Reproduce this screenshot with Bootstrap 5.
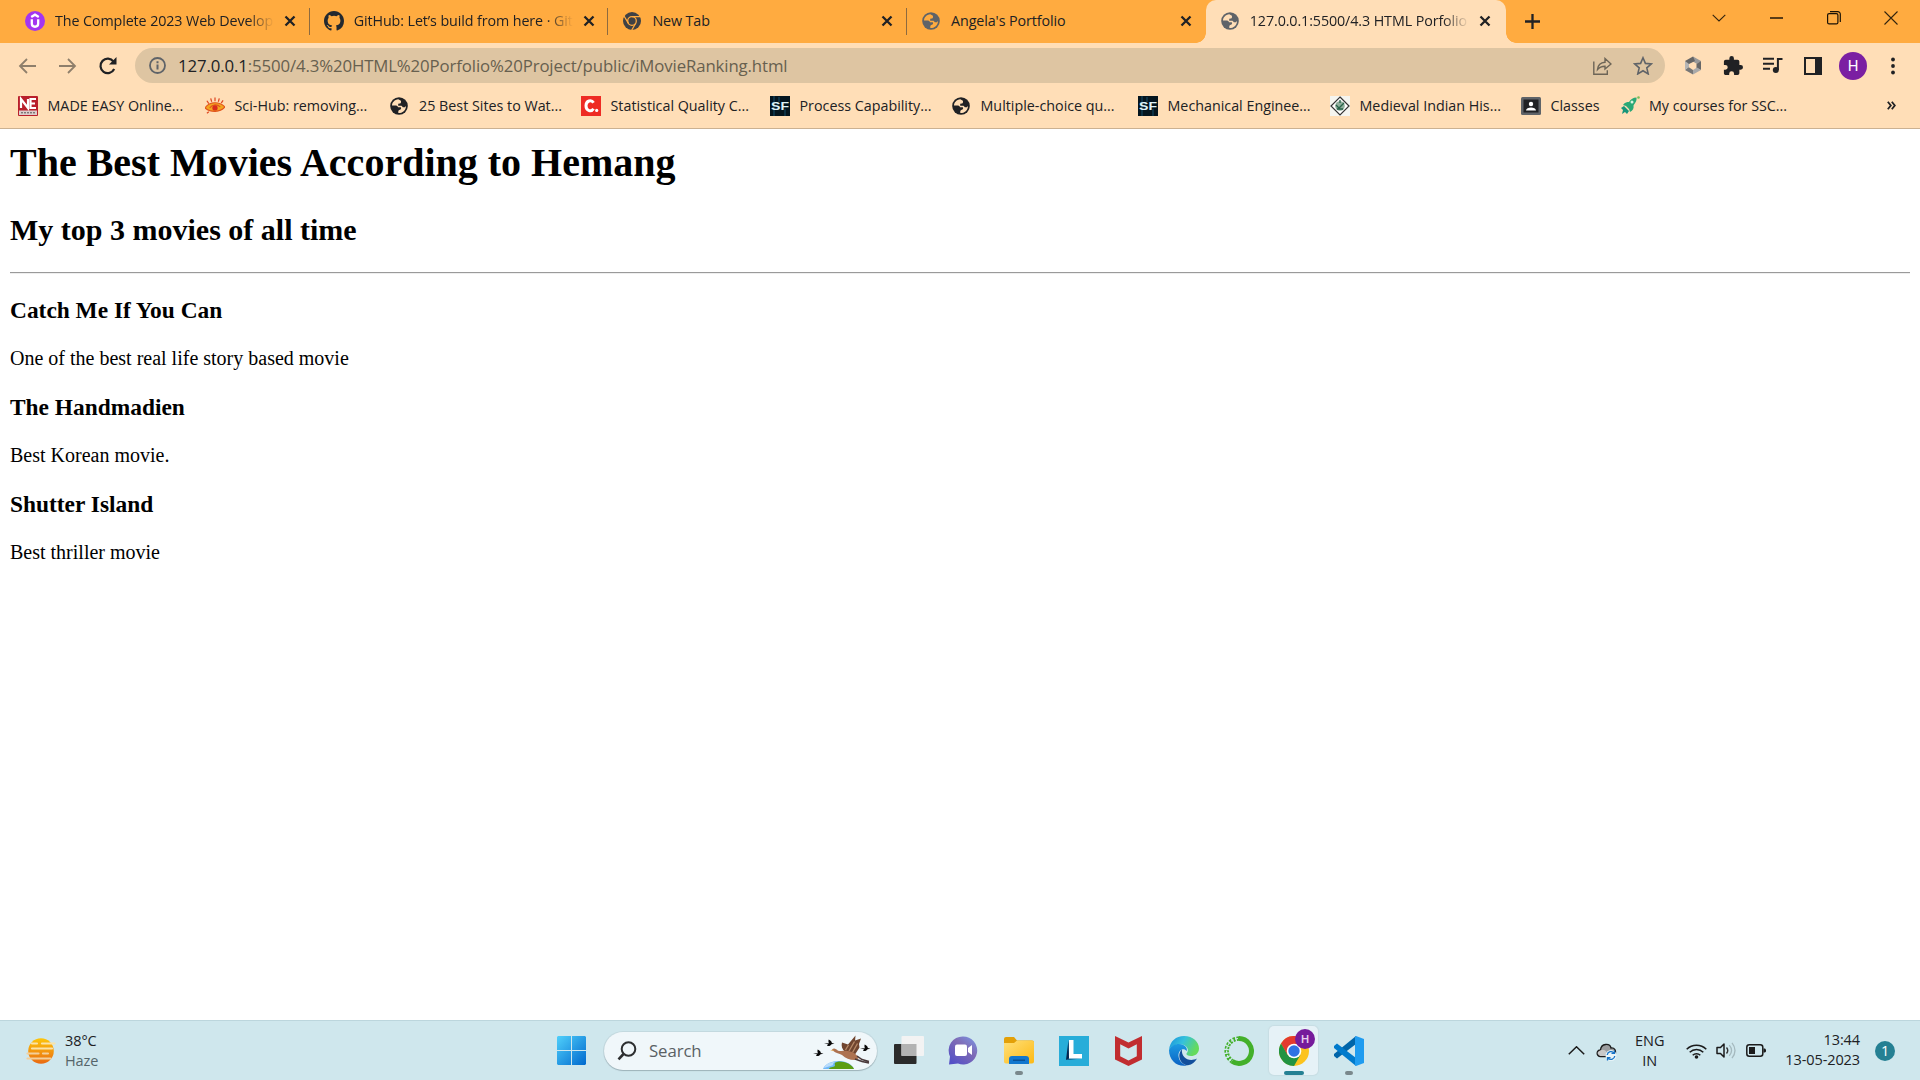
<!DOCTYPE html>
<html lang="en">
<head>
<meta charset="utf-8">
<title>The Best Movies According to Hemang</title>
<link href="https://cdn.jsdelivr.net/npm/bootstrap@5.3.0/dist/css/bootstrap.min.css" rel="stylesheet">
<style>
  :root { --frame: #ffab40; --bar: #ffdeb7; --ink: #202124; }
  body { width: 1920px; height: 1080px; font-family: "Open Sans", "Noto Sans", sans-serif; color: var(--ink); background: #fff; }
  svg { display: block; flex: none; }

  /* tab strip */
  .tabstrip { height: 43px; background: var(--frame); padding-left: 11px; font-size: 14.3px; letter-spacing: -.1px; }
  .tab { width: 298.7px; height: 43px; padding: 0 0 1px 14px; }
  .tab .caption { margin-left: 10px; width: 219px; line-height: 20px; }
  .tab .cut { -webkit-mask-image: linear-gradient(90deg, #000 88%, transparent 100%); mask-image: linear-gradient(90deg, #000 88%, transparent 100%); }
  .tab .shut { margin-left: 10px; }
  .tab.split { border-right: 1px solid transparent; border-image: linear-gradient(transparent 9px, #8d6a3f 9px, #8d6a3f 34px, transparent 34px) 1; }
  .tab.current { width: 300px; background: var(--bar); border-radius: 10px 10px 0 0; }
  .tab.current::before, .tab.current::after { content: ""; position: absolute; bottom: 0; width: 10px; height: 10px; }
  .tab.current::before { left: -10px; background: radial-gradient(circle at 0 0, transparent 9.5px, var(--bar) 10px); }
  .tab.current::after { right: -10px; background: radial-gradient(circle at 100% 0, transparent 9.5px, var(--bar) 10px); }
  .newtab { padding: 0 0 1px 19px; }
  .winctl { width: 57.3px; height: 36px; }

  /* toolbar */
  .tools { height: 44px; background: var(--bar); padding: 1px 14px 0 14px; }
  .nav-back { padding-left: 4px; }
  .nav-forward { padding-left: 23px; }
  .nav-reload { padding: 0 18px 0 22px; }
  .tool { width: 40px; height: 35px; }
  .omnibox { width: 1530px; height: 35px; background: #dec5a2; border-radius: 18px; padding: 0 12px 0 10px; }
  .address { margin-left: 12px; font-size: 16.8px; letter-spacing: -.12px; line-height: 24px; color: #67604f; }
  .address b { font-weight: 400; color: var(--ink); }
  .avatar { width: 28px; height: 28px; background: #7b1fa2; color: #fff; font: 15px/28px Roboto, sans-serif; }

  /* bookmarks */
  .marks { height: 42px; background: var(--bar); border-bottom: 1px solid #cbb192; padding: 0 0 4px 18px; font-size: 14.3px; letter-spacing: 0; }
  .bm { gap: 9.5px; flex: none; }

  /* document */
  .doc { height: 891px; padding: 11px 10px 10px; font-family: "Liberation Serif", "Times New Roman", serif; color: #000; }
  .doc h1 { font-size: 40px; line-height: 46px; font-weight: 700; margin: 0 0 27px; }
  .doc h2 { font-size: 30px; line-height: 34px; font-weight: 700; margin: 0 0 25px; }
  .doc hr { margin: 0 0 22px; height: 2px; border: 0; border-top: 1px solid #9a9a9a; border-bottom: 1px solid #eee; opacity: 1; }
  .doc h3 { font-size: 23.4px; line-height: 28px; font-weight: 700; margin: 0 0 22px; }
  .doc p { font-size: 20px; line-height: 24px; margin: 0 0 23px; }

  /* taskbar */
  .taskbar { height: 60px; background: #cfe7ed; border-top: 1px solid #bcd6dd; font-size: 14.5px; line-height: 20px; letter-spacing: -.1px; }
  .weather { width: 551px; padding-left: 26px; gap: 9px; }
  .weather .muted { color: #55656a; }
  .finder { width: 273px; height: 38px; margin: 0 6px 0 6px; background: #f0f7fa; border-radius: 19px; box-shadow: 0 1px 1px #9eb3ba, 0 0 0 1px #c3d9df; padding-left: 13px; font-size: 16.8px; color: #5a6164; }
  .app { width: 55px; height: 59px; }
  .app.live::after { content: ""; position: absolute; bottom: 5px; left: 50%; width: 8px; height: 4px; margin-left: -4px; border-radius: 2px; background: #7a888c; }
  .app.front::before { content: ""; position: absolute; inset: 5px 3px 5px 3px; background: #e6f2f7; border-radius: 5px; box-shadow: 0 0 1px 1px #c7dde3; }
  .app.front::after { width: 20px; margin-left: -10px; background: #258093; }
  .app svg { position: relative; }
  .app .who { top: 8px; right: 6px; }
  .tray { padding-right: 25px; }
  .note { width: 20px; height: 20px; background: #258093; color: #fff; margin-left: 15px; }
</style>
<script src="https://cdn.jsdelivr.net/npm/bootstrap@5.3.0/dist/js/bootstrap.bundle.min.js"></script>
</head>
<body class="d-flex flex-column overflow-hidden">

<svg width="0" height="0" class="position-absolute">
  <symbol id="x" viewBox="0 0 12 12"><path d="M1.500 1.500l9 9M10.500 1.500l-9 9" stroke="#202124" stroke-width="2.300" fill="none"/></symbol>
  <symbol id="globe" viewBox="0 0 18 18"><circle cx="9" cy="9" r="8.800" fill="currentColor"/><path d="M8.300 2.200C4.600 2.500 2 5.500 2 8.500h3.200c1.500 0 2.600.6 2.900 1.800h2.400c.8 0 .9 1.600 0 2.200-.7.500-2 .4-2.200 1.700v1.900c3.900.2 7.700-2.800 7.700-7.200l-1.200 1.300h-1.900L11.500 8.700H8.200V6.800l1.700-.4c1.200-.2 1.300-1.400 1-2.700z" fill="var(--hole)"/></symbol>
  <symbol id="sf" viewBox="0 0 20 20"><rect width="20" height="20" fill="#04151f"/><path d="M4 0v20M9 1v5M15 13v7" stroke="#0c3145" stroke-width="2"/><text x="1" y="13.800" font-family="Liberation Sans" font-weight="700" font-size="11.500" textLength="18" lengthAdjust="spacingAndGlyphs" fill="#dff3f8">SF</text></symbol>
</svg>

<header class="flex-shrink-0">
  <div class="tabstrip d-flex">
    <div class="tab split d-flex align-items-center">
      <svg width="20" height="20" viewBox="0 0 20 20"><circle cx="10" cy="10" r="10" fill="#a435f0"/><path d="M6.200 6L10 3.700 13.800 6M6.800 8.300v4.200c0 4.300 6.400 4.300 6.400 0V8.300" fill="none" stroke="#fff" stroke-width="2.300"/></svg>
      <div class="caption cut text-nowrap overflow-hidden">The Complete 2023 Web Develop</div>
      <svg class="shut" width="12" height="12"><use href="#x"/></svg>
    </div>
    <div class="tab split d-flex align-items-center">
      <svg width="20" height="20" viewBox="0 0 16 16"><path fill="#24292f" d="M8 0C3.580 0 0 3.580 0 8c0 3.540 2.290 6.530 5.470 7.590.4.070.55-.17.55-.38v-1.490c-2.010.37-2.530-.49-2.690-.94-.09-.23-.48-.94-.82-1.130-.28-.15-.68-.52-.01-.53.63-.01 1.080.58 1.230.82.72 1.210 1.870.87 2.330.66.070-.52.280-.87.510-1.070-1.780-.2-3.640-.89-3.640-3.950 0-.87.310-1.590.820-2.150-.080-.2-.36-1.020.080-2.120 0 0 .67-.21 2.200.820a7.600 7.600 0 0 1 4 0c1.530-1.040 2.200-.82 2.200-.82.440 1.100.160 1.920.080 2.120.51.560.82 1.270.82 2.150 0 3.070-1.870 3.750-3.650 3.950.29.250.54.730.54 1.480v2.200c0 .21.150.46.550.38A8.010 8.010 0 0 0 16 8c0-4.420-3.580-8-8-8z"/></svg>
      <div class="caption cut text-nowrap overflow-hidden">GitHub: Let’s build from here · Git</div>
      <svg class="shut" width="12" height="12"><use href="#x"/></svg>
    </div>
    <div class="tab split d-flex align-items-center">
      <svg width="20" height="20" viewBox="0 0 20 20"><circle cx="10" cy="10" r="9" fill="#3f4144"/><g fill="none" stroke="#ffab40" stroke-width="1.300"><circle cx="10" cy="10" r="4.300"/><path d="M10 5.700h8.500M6.300 12.200L2 5M13.700 12.200L9.500 19.500"/></g></svg>
      <div class="caption text-nowrap">New Tab</div>
      <svg class="shut" width="12" height="12"><use href="#x"/></svg>
    </div>
    <div class="tab d-flex align-items-center">
      <svg width="20" height="18" viewBox="-1 0 20 18" style="color:#5f6368;--hole:#ffab40"><use href="#globe" width="18" height="18"/></svg>
      <div class="caption text-nowrap">Angela's Portfolio</div>
      <svg class="shut" width="12" height="12"><use href="#x"/></svg>
    </div>
    <div class="tab current d-flex align-items-center position-relative">
      <svg width="20" height="18" viewBox="-1 0 20 18" style="color:#5f6368;--hole:#ffdeb7"><use href="#globe" width="18" height="18"/></svg>
      <div class="caption cut text-nowrap overflow-hidden">127.0.0.1:5500/4.3 HTML Porfolio</div>
      <svg class="shut" width="12" height="12"><use href="#x"/></svg>
    </div>
    <div class="newtab d-flex align-items-center"><svg width="15" height="15" viewBox="0 0 15 15"><path d="M7.500 0v15M0 7.500h15" stroke="#202124" stroke-width="2.300"/></svg></div>
    <div class="d-flex ms-auto">
      <div class="winctl d-flex align-items-center justify-content-center"><svg width="14" height="8" viewBox="0 0 14 8"><path d="M.7.800L7 7 13.300.8" fill="none" stroke="#33240f" stroke-width="1.100"/></svg></div>
      <div class="winctl d-flex align-items-center justify-content-center"><svg width="13" height="2"><path d="M0 1h13" stroke="#000" stroke-width="1.300"/></svg></div>
      <div class="winctl d-flex align-items-center justify-content-center"><svg width="14" height="14" viewBox="0 0 14 14"><g fill="none" stroke="#1a1206" stroke-width="1.200"><rect x=".6" y="2.600" width="10.300" height="10.300" rx="1.500"/><path d="M3 .7h7.800a2.500 2.500 0 0 1 2.500 2.500V11"/></g></svg></div>
      <div class="winctl d-flex align-items-center justify-content-center"><svg width="14" height="14" viewBox="0 0 14 14"><path d="M.5.500l13 13M13.500.500l-13 13" stroke="#33240f" stroke-width="1.100"/></svg></div>
    </div>
  </div>

  <div class="tools d-flex align-items-center">
    <div class="d-flex flex-shrink-0">
      <div class="nav-back d-flex align-items-center"><svg width="18" height="16" viewBox="0 0 18 16"><path d="M18 8H2M9 1L2 8l7 7" fill="none" stroke="#8f7f6b" stroke-width="1.800"/></svg></div>
      <div class="nav-forward d-flex align-items-center"><svg width="18" height="16" viewBox="0 0 18 16"><path d="M0 8h16M9 1l7 7-7 7" fill="none" stroke="#8f7f6b" stroke-width="1.800"/></svg></div>
      <div class="nav-reload d-flex align-items-center"><svg width="18" height="18" viewBox="0 0 18 18"><path d="M15.200 12A7.200 7.200 0 1 1 14.500 4.600" fill="none" stroke="#202124" stroke-width="2.200"/><path d="M17.500 0v7.500H10z" fill="#202124"/></svg></div>
    </div>
    <div class="omnibox d-flex align-items-center flex-shrink-0">
      <svg class="ms-1" width="17" height="17" viewBox="0 0 17 17"><circle cx="8.500" cy="8.500" r="7.500" fill="none" stroke="#5f6368" stroke-width="1.800"/><path d="M8.500 7.500v5M8.500 4.200v2" stroke="#5f6368" stroke-width="2"/></svg>
      <div class="address text-nowrap"><b>127.0.0.1</b>:5500/4.3%20HTML%20Porfolio%20Project/public/iMovieRanking.html</div>
      <svg class="ms-auto" width="19" height="18" viewBox="0 0 19 18"><path d="M.8 4.500v12.700h13.500v-4M4.500 12.500C5 8 8 5.500 12 5.300V1.500L18 7l-6 5V9.200c-3.500 0-5.500.8-7.500 3.300z" fill="none" stroke="#6d6557" stroke-width="1.400"/></svg>
      <svg style="margin-left:21px" width="20" height="19" viewBox="0 0 20 19"><path d="M10 1.800l2.400 5.600 6 .5-4.600 4 1.400 6L10 14.700 4.800 17.900l1.400-6-4.600-4 6-.5z" fill="none" stroke="#5f6368" stroke-width="1.600"/></svg>
    </div>
    <div class="d-flex flex-shrink-0 ps-2">
      <div class="tool d-flex align-items-center justify-content-center"><svg width="18" height="19" viewBox="0 0 18 19"><path d="M9 .5l8 4.500-4 3-4-2.500z" fill="#999"/><path d="M17 5v9l-4.500-2V8z" fill="#676767"/><path d="M17 14l-8 4.500V14l4-2.500z" fill="#a9a9a9"/><path d="M9 18.500L1 14l3.500-3L9 14z" fill="#777"/><path d="M1 14V5l4 2v4z" fill="#b5b5b5"/><path d="M1 5L9 .5 11 5 5 8z" fill="#666"/></svg></div>
      <div class="tool d-flex align-items-center justify-content-center"><svg width="20" height="20" viewBox="1 1 22 22"><path fill="#202124" d="M20.500 11H19V7a2 2 0 0 0-2-2h-4V3.500a2.500 2.500 0 0 0-5 0V5H4a2 2 0 0 0-2 2v3.800h1.500a2.700 2.700 0 0 1 0 5.400H2V20c0 1.100.9 2 2 2h3.800v-1.500a2.700 2.700 0 0 1 5.400 0V22H17a2 2 0 0 0 2-2v-4h1.500a2.500 2.500 0 0 0 0-5z"/></svg></div>
      <div class="tool d-flex align-items-center justify-content-center"><svg width="20" height="17" viewBox="0 0 20 17"><path d="M0 1.800h11M0 6.800h11M0 11.800h7" stroke="#202124" stroke-width="2"/><circle cx="12.800" cy="13" r="3" fill="#202124"/><path d="M14.900 13V2h4.600" fill="none" stroke="#202124" stroke-width="2"/></svg></div>
      <div class="tool d-flex align-items-center justify-content-center"><svg width="18" height="18" viewBox="0 0 18 18"><rect x="1" y="1" width="16" height="16" fill="none" stroke="#202124" stroke-width="2"/><path d="M11 1h6v16h-6z" fill="#202124"/></svg></div>
      <div class="tool d-flex align-items-center justify-content-center"><div class="avatar rounded-circle text-center">H</div></div>
      <div class="tool d-flex align-items-center justify-content-center"><svg width="4" height="18"><g fill="#202124"><circle cx="2" cy="2.500" r="1.900"/><circle cx="2" cy="9" r="1.900"/><circle cx="2" cy="15.500" r="1.900"/></g></svg></div>
    </div>
  </div>

  <nav class="marks d-flex align-items-center text-nowrap">
    <div class="bm d-flex align-items-center" style="width:187px"><svg width="20" height="20" viewBox="0 0 20 20"><rect width="20" height="20" rx="1" fill="#b91f2b"/><path d="M3 12V3l7 9V3M18 3h-5.500v9H18M12.500 7.500H17" fill="none" stroke="#fff" stroke-width="2.200"/><path d="M1 14.500h18V19H1z" fill="#dcc"/><path d="M3 16.800h14" stroke="#555" stroke-dasharray="2 1"/></svg>MADE EASY Online...</div>
    <div class="bm d-flex align-items-center" style="width:184.500px"><svg width="20" height="20" viewBox="0 0 21 20"><path d="M0 12c5-7 15-7 21-1-5 6-15 6-21 1z" fill="#f3a51f" stroke="#e1541d" stroke-width="1.200"/><path d="M5 12c3-4 8-4 11-1" fill="none" stroke="#e1541d" stroke-width="1.200"/><circle cx="10.500" cy="12" r="2.800" fill="#d82b1c"/><path d="M2 4.500l2 3M6 2l1 3.500M10.500 1v4M15 2l-1 3.500M19 4l-2 3M4 16l-2 1.500" stroke="#df4821" stroke-width="1.300"/></svg>Sci-Hub: removing...</div>
    <div class="bm d-flex align-items-center" style="width:191.500px"><svg width="20" height="18" viewBox="0 0 20 18" style="color:#202124;--hole:#ffdeb7"><use href="#globe" width="18" height="18"/></svg>25 Best Sites to Wat...</div>
    <div class="bm d-flex align-items-center" style="width:189px"><svg width="20" height="20" viewBox="0 0 20 20"><rect width="20" height="20" fill="#ee2b24"/><path d="M12.500 6.800c-2-3.500-7.500-2.400-7.500 3s5.500 6.300 7.500 3" fill="none" stroke="#fff" stroke-width="3"/><circle cx="15.700" cy="14.400" r="1.600" fill="#fff"/></svg>Statistical Quality C...</div>
    <div class="bm d-flex align-items-center" style="width:181px"><svg width="20" height="20"><use href="#sf"/></svg>Process Capability...</div>
    <div class="bm d-flex align-items-center" style="width:187px"><svg width="20" height="18" viewBox="-1 0 20 18" style="color:#202124;--hole:#ffdeb7"><use href="#globe" width="18" height="18"/></svg>Multiple-choice qu...</div>
    <div class="bm d-flex align-items-center" style="width:192px"><svg width="20" height="20"><use href="#sf"/></svg>Mechanical Enginee...</div>
    <div class="bm d-flex align-items-center" style="width:191px"><svg width="20" height="20" viewBox="0 0 20 20"><rect width="20" height="20" fill="#f5f5f0"/><path d="M10 1l9 9-9 9-9-9z" fill="#fff" stroke="#333" stroke-width="1.200"/><circle cx="10" cy="10" r="4.800" fill="#8fae9c"/><path d="M10 4v3M6 9l3 3 5-5M7 13h6" stroke="#27634a" stroke-width="1.300" fill="none"/></svg>Medieval Indian His...</div>
    <div class="bm d-flex align-items-center" style="width:98.500px"><svg width="20" height="18" viewBox="0 0 20 18"><rect width="20" height="18" rx="1.500" fill="#5f6368"/><rect x="2.500" y="2.500" width="15" height="13" fill="#202124"/><circle cx="10" cy="7" r="2.200" fill="#fff"/><path d="M5 13.500c0-4 10-4 10 0z" fill="#fff"/></svg>Classes</div>
    <div class="bm d-flex align-items-center"><svg width="20" height="20" viewBox="0 0 20 20"><path d="M3 9c2-3 4-3 6-3 2-3 4-4.500 7.500-4.500C17 5 15 7 13.500 9.500c.5 3-.5 5-3.500 6.500l-1-3-3-3z" fill="#2aa876"/><circle cx="12" cy="6" r="1.500" fill="#d9f3df"/><path d="M1 12l3-2 5 5-2 3-2-2-3 2 1-4z" fill="#16957a"/><circle cx="18.500" cy="1.500" r="1.300" fill="#79bd58"/></svg>My courses for SSC...</div>
    <svg class="ms-auto me-4" width="9" height="9" viewBox="0 0 9 9"><path d="M.8.800l3 3.700-3 3.700M4.800.800l3 3.700-3 3.700" fill="none" stroke="#202124" stroke-width="1.800"/></svg>
  </nav>
</header>

<main class="doc">
  <h1>The Best Movies According to Hemang</h1>
  <h2>My top 3 movies of all time</h2>
  <hr>
  <h3>Catch Me If You Can</h3>
  <p>One of the best real life story based movie</p>
  <h3>The Handmadien</h3>
  <p>Best Korean movie.</p>
  <h3>Shutter Island</h3>
  <p>Best thriller movie</p>
</main>

<footer class="taskbar d-flex align-items-center flex-shrink-0 text-nowrap">
  <div class="weather d-flex align-items-center">
    <svg width="30" height="26" viewBox="0 0 30 26"><defs><linearGradient id="sun" x2="0" y2="1"><stop stop-color="#fdc60b"/><stop offset="1" stop-color="#e96a13"/></linearGradient></defs><circle cx="15" cy="13" r="12.800" fill="url(#sun)"/><g stroke="#fbe3a6" stroke-width="2.200" stroke-linecap="round"><path d="M6 5.500h5M16 5.500h12.500M6 10.500h20"/><path d="M1.500 15.500h11M17 15.500h5M1.500 20.500h23" stroke="#f3cf9a"/></g></svg>
    <div><div>38°C</div><div class="muted">Haze</div></div>
  </div>
  <div class="d-flex align-items-center">
    <div class="d-flex ps-1 pe-2"><svg style="margin:0 4px 0 2px" width="29" height="29" viewBox="0 0 29 29"><defs><linearGradient id="win" x2="1" y2="1"><stop stop-color="#50d0fb"/><stop offset="1" stop-color="#0069ce"/></linearGradient></defs><path fill="url(#win)" d="M1 0h13v14H0V1zM15 0h13l1 1v13H15zM0 15h14v14H1l-1-1zM15 15h14v13l-1 1H15z"/></svg></div>
    <div class="finder d-flex align-items-center">
      <svg width="20" height="20" viewBox="0 0 20 20"><circle cx="11.500" cy="8" r="6.800" fill="none" stroke="#2d2f30" stroke-width="2"/><path d="M6.500 13L1.500 18.300" stroke="#2d2f30" stroke-width="2.600"/></svg>
      <span style="margin-left:12px">Search</span>
      <svg class="ms-auto" style="margin-right:5px" width="60" height="36" viewBox="0 0 60 36">
        <path d="M11 36c4-10 26-11 31 0z" fill="#70b8f8"/><path d="M17 36c1-3 6-1 6-4-1-2 1-3 4-3.400 7 0 13 3 15 7.400z" fill="#5b9d12"/><path d="M12 35c1-4 6-6 11-6-3 1-1 3-3 3.500z" fill="#b8dcfb"/>
        <g fill="#080808"><path id="bird" d="M1 20.500l5-.3c-.6-1-.8-2-.3-3.700 2 .8 2.800 1.800 3.200 3.500l2.600.8-3 .5c-.8 1.400-2.600 2.300-4.500 1.400l1-1.500z"/><use href="#bird" x="11" y="-10"/><use href="#bird" x="47" y="-5"/></g>
        <path d="M33 19C30 16 29 13 30 9.500l6 2 7.500-9-.4 5L49 5.500l-2 5.500.5 3.500-4.500 7z" fill="#70452f"/><path d="M33.500 17l3-5M37 18l5.500-9.500M40.500 19.500l5-9" stroke="#b98b68" stroke-width="1.300"/>
        <path d="M20 16.500c2-2 4-.5 6 1.200 4 .8 6-.2 10 .3 6 1 9 4 11 6.800l-3 2.200c-6 .3-10-1.500-14-5-3-2-6-1.500-8-3.500z" fill="#ad7250"/><path d="M18.300 17.300l3-.8.600 1.500z" fill="#d89a45"/>
        <path d="M45 23l5 3.500 7 2M43 26l7 2.500 7 1.500" fill="none" stroke="#49393a" stroke-width="1.500"/>
      </svg>
    </div>
    <div class="app d-flex align-items-center justify-content-center" style="width:51px"><svg width="30" height="29" viewBox="0 0 30 29"><rect y="8" width="22.500" height="20" rx="1" fill="#2b2b2b"/><rect x="7.500" y="0" width="22.500" height="20" rx="1" fill="#f3f3f3"/><path d="M7.500 8h15v12h-15z" fill="#b3b3b3"/></svg></div>
    <div class="app d-flex align-items-center justify-content-center" style="width:57px"><svg width="30" height="29" viewBox="0 0 30 29"><defs><linearGradient id="chat" x1="1" y1="0" x2=".2" y2="1"><stop stop-color="#7b99e8"/><stop offset=".45" stop-color="#7f6bb5"/><stop offset="1" stop-color="#5450c7"/></linearGradient></defs><path d="M15 .5a14 14 0 1 1-5 27L1 28.500l1-8A14 14 0 0 1 15 .500z" fill="url(#chat)"/><rect x="7" y="8.500" width="12" height="11.500" rx="2" fill="#fff"/><path d="M20 12l4-3v10l-4-3z" fill="#fff"/></svg></div>
    <div class="app live position-relative d-flex align-items-center justify-content-center"><svg width="30" height="27" viewBox="0 0 30 27"><defs><linearGradient id="fold" x2="1" y2="1"><stop stop-color="#ffe07a"/><stop offset="1" stop-color="#fdb913"/></linearGradient></defs><path d="M0 2a2 2 0 0 1 2-2h8l3 3.500h15a2 2 0 0 1 2 2V12H0z" fill="#e3a008"/><path d="M0 6h10l3-2.500h15a2 2 0 0 1 2 2v19a2 2 0 0 1-2 2H2a2 2 0 0 1-2-2z" fill="url(#fold)"/><path d="M5 27v-5a3 3 0 0 1 3-3h14a3 3 0 0 1 3 3v5z" fill="#1277ce"/><path d="M9 23.200h12" stroke="#0a4b8c" stroke-width="1.300"/></svg></div>
    <div class="app d-flex align-items-center justify-content-center"><svg width="30" height="30" viewBox="0 0 30 30"><path d="M0 0h30v30H0z" fill="#27add9"/><path d="M9.500 4L7 24l3-1.500z" fill="#06234d"/><path d="M7 24l16-1.500H10z" fill="#0a4170"/><path d="M10 4h4.500v14H23v4.500H10z" fill="#fff"/></svg></div>
    <div class="app d-flex align-items-center justify-content-center"><svg width="27" height="30" viewBox="0 0 27 30"><path d="M0 0l13.500 6.500L27 0v23.500L13.500 30 0 23.500zM5.200 8.300v12L13.500 24.500l8.300-4.200v-12l-8.300 4.200z" fill="#c12d30" fill-rule="evenodd"/></svg></div>
    <div class="app d-flex align-items-center justify-content-center"><svg width="30" height="30" viewBox="0 0 30 30"><defs><linearGradient id="ed1" x2="1" y2=".4"><stop stop-color="#1790dd"/><stop offset=".5" stop-color="#35c1dc"/><stop offset="1" stop-color="#65db5c"/></linearGradient><linearGradient id="ed2" x2="0" y2="1"><stop stop-color="#1c9be2"/><stop offset="1" stop-color="#0b62c4"/></linearGradient></defs><path d="M0 14C1 5 7 0 15 0c9 0 15 6 15 12.500 0 5-4 7.500-8 7.500-3 0-5-1-4.500-2.500 3-3 1-8-4.500-9C7 8 2 10 0 14z" fill="url(#ed1)"/><path d="M0 14c3-7 13-8 17-3 1 1.500 1 3 .7 4C14 11 9 15 9.500 20c.5 5 4 8.500 8.500 9.500C9 31.500 0 25 0 14z" fill="url(#ed2)"/><path d="M13 13.500C7 19 12 29.500 19 29.300c4-.8 7-3.300 9-6.800-8 4-16-1-15-9z" fill="#124f9c"/></svg></div>
    <div class="app d-flex align-items-center justify-content-center"><svg width="30" height="30" viewBox="0 0 30 30"><path d="M15 2.600a12.400 12.400 0 1 1-7 22.600" fill="none" stroke="#43b02a" stroke-width="5"/><path d="M15 2.600A12.400 12.400 0 0 0 8 25.200" fill="none" stroke="#43b02a" stroke-width="4.500" stroke-dasharray="2.400 1.300"/><path d="M14 2.500A12.500 12.500 0 0 0 7 24.500" fill="none" stroke="#cfe7ed" stroke-width="1.200" stroke-dasharray="3 1.500"/></svg></div>
    <div class="app live front position-relative d-flex align-items-center justify-content-center">
      <svg width="30" height="30" viewBox="0 0 30 30"><circle cx="15" cy="15" r="15" fill="#fcc31e"/><path d="M2 7.500A15 15 0 0 1 28 7.500L15 8l-6.500 11z" fill="#e33b2e"/><path d="M2 7.500L8.500 18.700 15 22l6.500-3.300L15 30A15 15 0 0 1 2 7.500z" fill="#229342"/><circle cx="15" cy="15" r="7.300" fill="#fff"/><circle cx="15" cy="15" r="5.700" fill="#2f72e4"/></svg>
      <svg class="who position-absolute" width="20" height="20" viewBox="0 0 20 20"><circle cx="10" cy="10" r="10" fill="#761b9b"/><text x="10" y="14" font-family="Roboto" font-size="11.500" font-weight="500" text-anchor="middle" fill="#e8cfee">H</text></svg>
    </div>
    <div class="app live position-relative d-flex align-items-center justify-content-center"><svg width="30" height="30" viewBox="0 0 30 30"><path d="M22 0v8L3 22.500 0 20v-2z" fill="#0065a9"/><path d="M22 30v-8L3 7.500 0 10v2z" fill="#007acc"/><path d="M22 0l8 3v24l-8 3-1-1V1z" fill="#1f9cf0"/></svg></div>
  </div>
  <div class="tray d-flex align-items-center ms-auto">
    <svg width="17" height="9" viewBox="0 0 17 9"><path d="M.8 8.300l7.700-7.500 7.700 7.500" fill="none" stroke="#1b1b1b" stroke-width="1.500"/></svg>
    <svg style="margin:2px 18px 0 11px" width="21" height="18" viewBox="0 0 21 18"><path d="M4.500 13.500C0 13.500 0 7 4.500 7 5 0 14 0 15 5c4-.5 5 3 4.500 5.500L16 13.500z" fill="#9b9c9e" stroke="#1b1b1b" stroke-width="1.300"/><path d="M1.500 10c3-4 7-4 9-1l-1 4H4z" fill="#c8c8c8"/><circle cx="15" cy="12.500" r="5.500" fill="#e8f4f8"/><path d="M11.200 12a4 4 0 0 1 7-2M18.800 13a4 4 0 0 1-7 2M18.500 7.500V10.300h-3M11.500 17.500v-2.800h3" fill="none" stroke="#1672c7" stroke-width="1.300"/></svg>
    <div class="text-center">ENG<br>IN</div>
    <svg style="margin-left:22px" width="21" height="16" viewBox="0 0 21 16"><g fill="none" stroke="#1b1b1b" stroke-width="1.500"><path d="M.7 6.200a14 14 0 0 1 19.600 0M3.700 9.300a9.700 9.700 0 0 1 13.600 0M6.700 12.300a5.500 5.500 0 0 1 7.600 0"/></g><circle cx="10.500" cy="14" r="1.800" fill="#1b1b1b"/></svg>
    <svg style="margin-left:9px" width="20" height="17" viewBox="0 0 20 17"><path d="M1 5.500h3.500L8 2v13l-3.500-3.500H1z" fill="none" stroke="#1b1b1b" stroke-width="1.500" stroke-linejoin="round"/><path d="M10.500 5.500q2.500 3 0 6" fill="none" stroke="#333" stroke-width="1.400"/><path d="M13.300 3.200q4.500 5.300 0 10.600M16 .800q6 7.500 0 15.400" fill="none" stroke="#a5b9be" stroke-width="1.300"/></svg>
    <svg style="margin:0 19px 0 10px" width="20" height="13" viewBox="0 0 20 13"><rect x=".8" y=".8" width="16" height="11.400" rx="2.500" fill="none" stroke="#1b1b1b" stroke-width="1.500"/><rect x="3" y="3" width="6" height="7" fill="#1b1b1b"/><path d="M17.500 4.500h1.500l1 1v2l-1 1h-1.500z" fill="#1b1b1b"/></svg>
    <div class="text-end" style="padding-bottom:2px">13:44<br>13-05-2023</div>
    <div class="note rounded-circle text-center">1</div>
  </div>
</footer>
</body>
</html>
